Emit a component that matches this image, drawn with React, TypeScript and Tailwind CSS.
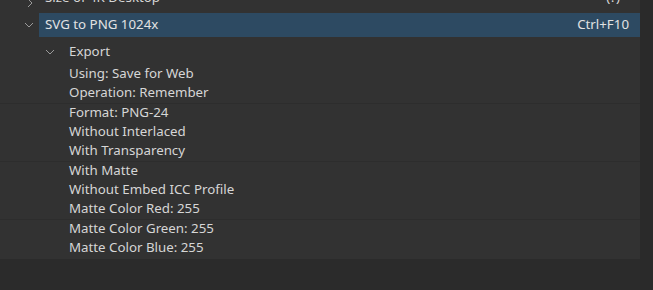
import { ReactNode } from "react";

const items = [
  "Using: Save for Web",
  "Operation: Remember",
  "Format: PNG-24",
  "Without Interlaced",
  "With Transparency",
  "With Matte",
  "Without Embed ICC Profile",
  "Matte Color Red: 255",
  "Matte Color Green: 255",
  "Matte Color Blue: 255",
];

const Chevron = ({ open }: { open: boolean }) => (
  <svg width="10" height="10" viewBox="0 0 10 10" className="shrink-0">
    <path
      d={open ? "M1 3 L5 7 L9 3" : "M3 1 L7 5 L3 9"}
      fill="none"
      stroke="#9a9a9a"
      strokeWidth="1"
    />
  </svg>
);

const Row = ({ children, className = "" }: { children: ReactNode; className?: string }) => (
  <div className={`flex items-center h-[19.4px] ${className}`}>{children}</div>
);

export default function App() {
  return (
    <div
      className="w-[653px] h-[290px] bg-[#2b2b2b] flex overflow-hidden text-[13.3px] text-[#d6d6d6]"
      style={{ fontFamily: '"Noto Sans", "Liberation Sans", Arial, sans-serif' }}
    >
      <div className="w-[640px] flex flex-col">
        <div className="bg-[#323232] -mt-[7px]">
          <div className="flex items-center h-[20px] pl-[25px]">
            <Chevron open={false} />
            <span className="ml-[10px] flex-1 -mt-[10px]">Size of 4K Desktop</span>
            <span className="mr-[20px] -mt-[10px]">(?)</span>
          </div>
          <div className="flex items-center h-[24px]">
            <div className="w-[39px] flex justify-end pr-[5px]">
              <Chevron open />
            </div>
            <div className="flex-1 h-full bg-[#2d4a62] flex items-center pl-[6px] pr-[11px] text-[#e2e2e2]">
              <span className="flex-1">SVG to PNG 1024x</span>
              <span>Ctrl+F10</span>
            </div>
          </div>
          <div className="flex items-center h-[28px] pl-[45px] pt-[1px]">
            <Chevron open />
            <span className="ml-[14px]">Export</span>
          </div>
          <div className="flex flex-col pl-[69px] pb-[1px] -mt-[1px]">
            {items.map((t, i) => (
              <Row
                key={t}
                className={i === 2 || i === 5 || i === 8 ? "border-t border-[#2d2d2d] -ml-[69px] pl-[69px]" : ""}
              >
                {t}
              </Row>
            ))}
          </div>
        </div>
      </div>
      <div className="flex-1 bg-[#2a2a2a]" />
    </div>
  );
}
